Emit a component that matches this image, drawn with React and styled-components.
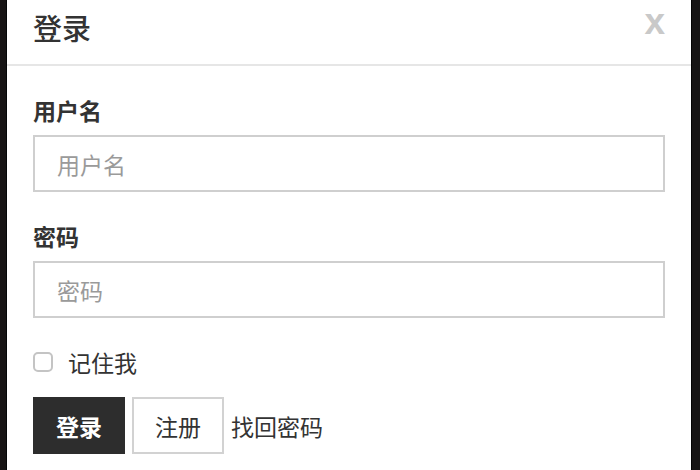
import React from "react";
import styled, { createGlobalStyle } from "styled-components";

const GlobalStyle = createGlobalStyle`
  html, body {
    margin: 0;
    padding: 0;
    background: #171515;
    overflow: hidden;
  }
  body {
    font-family: "Noto Sans CJK SC", "Liberation Sans", sans-serif;
    color: #333;
  }
`;

const Backdrop = styled.div`
  padding: 0 8px 0 6px;
  min-height: 100vh;
  background: #171515;
`;

const Modal = styled.div`
  background: #fff;
  border-left: 1px solid #050708;
  border-right: 1px solid #050505;
  min-height: 100vh;
`;

const Header = styled.div`
  display: flex;
  justify-content: space-between;
  align-items: center;
  padding: 7px 26px 17px 26px;
  border-bottom: 2px solid #e6e6e6;
`;

const Title = styled.h4`
  margin: 0;
  font-size: 29px;
  line-height: 40px;
  font-weight: 500;
  color: #333;
`;

const Close = styled.button`
  border: none;
  background: none;
  padding: 0;
  font-family: "Liberation Sans", Arial, sans-serif;
  font-size: 37px;
  font-weight: bold;
  line-height: 40px;
  color: #c9c9c9;
  cursor: pointer;
  margin-top: -10px;
`;

const Body = styled.form`
  padding: 28px 26px 20px 26px;
`;

const Group = styled.div`
  margin-bottom: 28px;
`;

const Label = styled.label`
  display: block;
  font-size: 23px;
  line-height: 32px;
  font-weight: bold;
  margin-bottom: 9px;
`;

const Input = styled.input`
  display: block;
  box-sizing: border-box;
  width: 100%;
  height: 57px;
  padding: 0 22px;
  border: 2px solid #cfcfcf;
  font-family: inherit;
  font-size: 23px;
  color: #333;
  outline: none;
  &::placeholder {
    color: #9a9a9a;
  }
`;

const CheckRow = styled.label`
  display: flex;
  align-items: center;
  gap: 15px;
  font-size: 23px;
  line-height: 32px;
  margin-bottom: 19px;
`;

const Check = styled.input`
  appearance: none;
  margin: 0;
  width: 20px;
  height: 20px;
  box-sizing: border-box;
  border: 2px solid #c4c4c4;
  border-radius: 5px;
  background: #fff;
`;

const Actions = styled.div`
  display: flex;
  align-items: center;
  gap: 7px;
`;

const Button = styled.button`
  box-sizing: border-box;
  height: 57px;
  padding: 0 21px;
  font-family: inherit;
  font-size: 23px;
  font-weight: ${(p) => (p.$primary ? "bold" : "normal")};
  color: ${(p) => (p.$primary ? "#fff" : "#333")};
  background: ${(p) => (p.$primary ? "#2d2d2d" : "#fff")};
  border: 2px solid ${(p) => (p.$primary ? "#2d2d2d" : "#d2d2d2")};
  cursor: pointer;
`;

const TextLink = styled.a`
  font-size: 23px;
  color: #333;
  text-decoration: none;
`;

export default function App() {
  return (
    <>
      <GlobalStyle />
      <Backdrop>
        <Modal>
          <Header>
            <Title>登录</Title>
            <Close type="button">x</Close>
          </Header>
          <Body>
            <Group>
              <Label>用户名</Label>
              <Input type="text" placeholder="用户名" />
            </Group>
            <Group>
              <Label>密码</Label>
              <Input type="password" placeholder="密码" />
            </Group>
            <CheckRow>
              <Check type="checkbox" />
              记住我
            </CheckRow>
            <Actions>
              <Button type="button" $primary>
                登录
              </Button>
              <Button type="button">注册</Button>
              <TextLink href="#">找回密码</TextLink>
            </Actions>
          </Body>
        </Modal>
      </Backdrop>
    </>
  );
}
